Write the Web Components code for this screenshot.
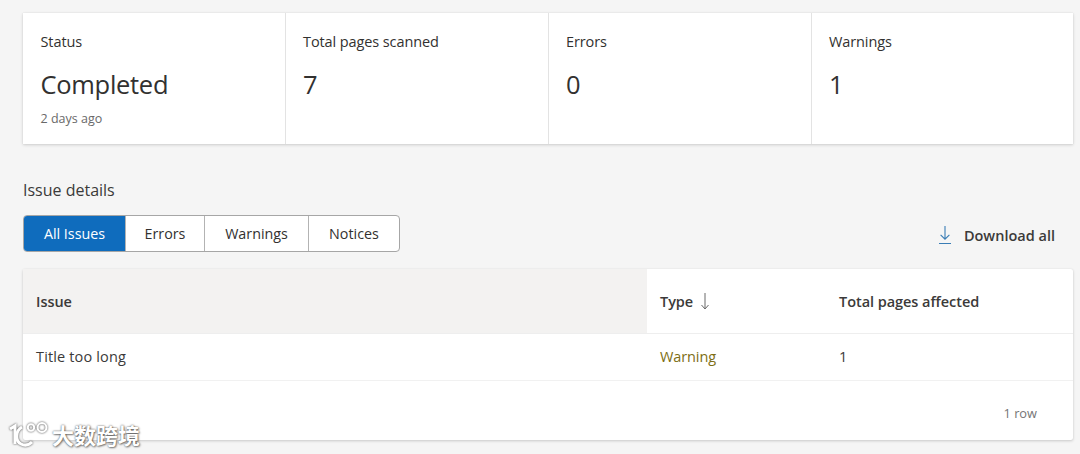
<!DOCTYPE html>
<html>
<head>
<meta charset="utf-8">
<style>
  html, body { margin: 0; height: 454px; overflow: hidden; background: #f5f5f5; }
  body { font-family: "Open Sans", "Noto Sans", sans-serif; color: #323130; position: relative; }
</style>
</head>
<body>
<scan-page></scan-page>

<template id="summary-card-tpl">
  <style>
    :host { display: block; box-sizing: border-box; padding: 19px 17px 0 17px; border-left: 1px solid #e3e3e3; }
    :host(:first-child) { border-left: 0; padding-left: 17.5px; }
    .label { font-size: 14.5px; line-height: 19px; letter-spacing: -.1px; color: #323130; }
    .value { font-size: 25.5px; line-height: 36px; margin-top: 15px; letter-spacing: -.3px; color: #323130; }
    .sub { font-size: 12.5px; line-height: 17px; margin-top: 8px; color: #696969; }
  </style>
  <div class="label"></div>
  <div class="value"></div>
  <div class="sub"><slot></slot></div>
</template>

<template id="summary-row-tpl">
  <style>
    :host { display: grid; grid-template-columns: 262px 263px 263px 1fr; height: 131px; background: #fff;
      box-shadow: 0 1px 3px rgba(0,0,0,.16), 0 0 1px rgba(0,0,0,.1); }
  </style>
  <slot></slot>
</template>

<template id="filter-tabs-tpl">
  <style>
    :host { display: inline-flex; height: 37px; box-sizing: border-box; border: 1px solid #a6a6a6; border-radius: 4px; background: #fff; overflow: hidden; }
    ::slotted(*) { display: flex; align-items: center; justify-content: center; box-sizing: border-box; height: 100%;
      font-size: 14.3px; color: #323130; border-left: 1px solid #b3b3b3; }
    ::slotted(:first-child) { border-left: 0; background: #0f6cbd; color: #fff; }
  </style>
  <slot></slot>
</template>

<template id="download-link-tpl">
  <style>
    :host { display: flex; align-items: center; gap: 12px; font-size: 14.5px; font-weight: 600; color: #3b3a39; }
    svg { display: block; }
  </style>
  <svg width="14" height="20" viewBox="0 0 14 20" fill="none" stroke="#3a7db5" stroke-width="1.1">
    <path d="M7 1v13M2.6 9.8 7 14.2l4.4-4.4M1 18.5h12"/>
  </svg>
  <span><slot></slot></span>
</template>

<template id="issue-table-tpl">
  <style>
    :host { display: block; background: #fff; height: 171px; border-radius: 2px;
      box-shadow: 0 1px 3px rgba(0,0,0,.18), 0 0 1px rgba(0,0,0,.1); font-size: 14.5px; }
    .row { display: grid; grid-template-columns: 624px 179px 1fr; align-items: stretch; }
    .cell { display: flex; align-items: center; padding-left: 13px; }
    .head { height: 64px; font-weight: 600; color: #3b3a39; border-bottom: 1px solid #eeeeee; letter-spacing: -.05px; }
    .head .cell:first-child { background: #f3f2f1; }
    .body { height: 46px; border-bottom: 1px solid #f1f1f1; color: #3b3a39; }
    .body .cell { padding-bottom: 2px; }
    .title { letter-spacing: .15px; }
    .warn { color: #7d6e14; letter-spacing: -.1px; }
    .arrow { margin-left: 6px; display: block; }
    .foot { display: flex; justify-content: flex-end; padding: 24px 36px 0 0; font-size: 12.8px; line-height: 17px; color: #757575; }
  </style>
  <div class="row head">
    <div class="cell">Issue</div>
    <div class="cell">Type
      <svg class="arrow" width="12" height="20" viewBox="0 0 12 20" fill="none" stroke="#6b6b6b" stroke-width="1">
        <path d="M6 2v16M2.5 14l3.5 4 3.5-4"/>
      </svg>
    </div>
    <div class="cell">Total pages affected</div>
  </div>
  <div class="row body">
    <div class="cell title">Title too long</div>
    <div class="cell warn">Warning</div>
    <div class="cell">1</div>
  </div>
  <div class="foot"><slot></slot></div>
</template>

<template id="water-mark-tpl">
  <style>
    :host { position: absolute; left: 9px; top: 420px; display: flex; align-items: center; gap: 3px; }
    svg { display: block; filter: drop-shadow(0 0 1px rgba(0,0,0,.75)); }
    span { font-family: "Noto Sans CJK SC", sans-serif; font-size: 22px; line-height: 28px; font-weight: 700; color: #fff;
      text-shadow: 0 0 2px rgba(0,0,0,.7), 1px 1px 2px rgba(0,0,0,.4); }
  </style>
  <svg width="40" height="26" viewBox="0 0 40 26" fill="none" stroke="#fff" stroke-width="3">
    <path d="M1 8 6 5v18"/>
    <path d="M13 6C6 10 6 20 12 23c4 2 8 1 11-2"/>
    <circle cx="22" cy="6.5" r="3.2" stroke-width="2"/>
    <circle cx="33" cy="6.5" r="4.4" stroke-width="2"/>
  </svg>
  <span><slot></slot></span>
</template>

<template id="scan-page-tpl">
  <style>
    :host { display: block; padding: 13px 7px 0 23px; }
    h2 { margin: 35px 0 0; font-size: 16px; font-weight: 400; line-height: 22px; color: #3b3a39; }
    .toolbar { display: flex; justify-content: space-between; align-items: center; margin-top: 14px; padding-right: 18px; }
    .toolbar > download-link { margin-top: 3px; }
    issue-table { margin-top: 17px; }
  </style>
  <summary-row>
    <summary-card label="Status" value="Completed">2 days ago</summary-card>
    <summary-card label="Total pages scanned" value="7"></summary-card>
    <summary-card label="Errors" value="0"></summary-card>
    <summary-card label="Warnings" value="1"></summary-card>
  </summary-row>
  <h2>Issue details</h2>
  <div class="toolbar">
    <filter-tabs>
      <span style="width:101px">All Issues</span>
      <span style="width:79px">Errors</span>
      <span style="width:104px">Warnings</span>
      <span style="width:91px">Notices</span>
    </filter-tabs>
    <download-link>Download all</download-link>
  </div>
  <issue-table>1 row</issue-table>
  <water-mark>大数跨境</water-mark>
</template>

<script>
  // shadow root from the template with the given id
  function shadowFrom(el, id) {
    const root = el.attachShadow({ mode: "open" });
    root.appendChild(document.getElementById(id).content.cloneNode(true));
    return root;
  }

  class SummaryCard extends HTMLElement {
    constructor() {
      super();
      const root = shadowFrom(this, "summary-card-tpl");
      root.querySelector(".label").textContent = this.getAttribute("label");
      root.querySelector(".value").textContent = this.getAttribute("value");
    }
  }

  class SimpleBlock extends HTMLElement {
    constructor() {
      super();
      shadowFrom(this, this.localName + "-tpl");
    }
  }

  customElements.define("summary-row", class extends SimpleBlock {});
  customElements.define("filter-tabs", class extends SimpleBlock {});
  customElements.define("download-link", class extends SimpleBlock {});
  customElements.define("issue-table", class extends SimpleBlock {});
  customElements.define("water-mark", class extends SimpleBlock {});
  customElements.define("summary-card", SummaryCard);
  customElements.define("scan-page", class extends SimpleBlock {});
</script>
</body>
</html>
